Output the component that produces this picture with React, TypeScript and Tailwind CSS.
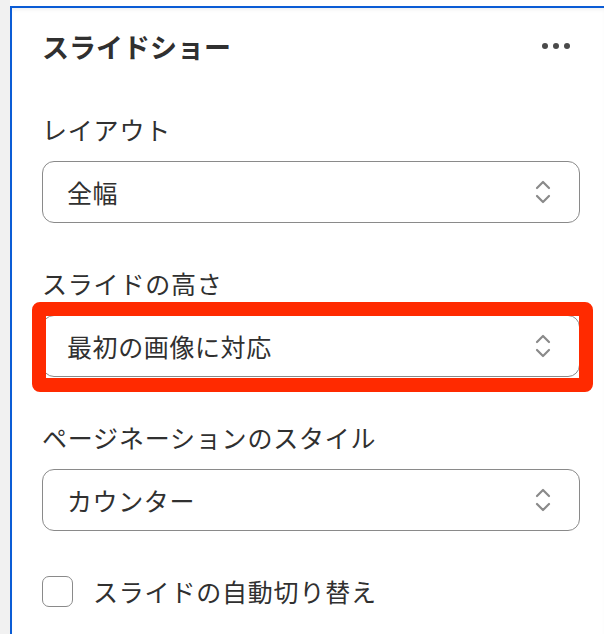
import React from "react";

const font = { fontFamily: '"Noto Sans CJK JP", "Noto Sans", sans-serif' };

function Chevrons() {
  return (
    <svg width="16" height="24" viewBox="0 0 16 24" fill="none" stroke="#8a8a8a" strokeWidth="2.2" strokeLinecap="round" strokeLinejoin="round">
      <polyline points="2,8 8,2 14,8" />
      <polyline points="2,16 8,22 14,16" />
    </svg>
  );
}

function Select({ value }: { value: string }) {
  return (
    <div className="flex h-[62px] items-center justify-between rounded-[12px] border border-[#8a8a8a] bg-white pl-[24px] pr-[28px]">
      <span className="text-[25px] leading-none tracking-[0.6px] text-[#303030]">{value}</span>
      <Chevrons />
    </div>
  );
}

function Field({ label, value, highlight }: { label: string; value: string; highlight?: boolean }) {
  return (
    <div className="mt-[44px] flex flex-col">
      <div className="h-[32px] text-[25px] leading-[32px] tracking-[0.8px] text-[#303030]">{label}</div>
      <div className="relative mt-[16px]">
        <Select value={value} />
        {highlight && (
          <div className="pointer-events-none absolute -top-[13px] -bottom-[15px] -left-[10px] -right-[13px] rounded-[8px] border-[14px] border-[#ff2a00]" />
        )}
      </div>
    </div>
  );
}

export default function App() {
  return (
    <div className="flex h-[634px] w-[604px] overflow-hidden bg-white" style={font}>
      <div className="w-[10px] shrink-0 bg-[#f1f1f1]" />
      <div className="flex flex-1 flex-col pt-[6px]">
        <div className="flex flex-1 flex-col border-t-2 border-l-2 border-[#0b5cd5] pl-[30px] pr-[24px] shadow-[inset_0_3px_4px_-2px_rgba(0,0,0,0.08)]">
          <div className="mt-[20px] flex h-[36px] items-center justify-between">
            <h2 className="text-[27px] font-bold leading-none text-[#303030]">スライドショー</h2>
            <div className="mr-[10px] flex items-center gap-[5px]">
              <span className="h-[6px] w-[6px] rounded-full bg-[#4a4a4a]" />
              <span className="h-[6px] w-[6px] rounded-full bg-[#4a4a4a]" />
              <span className="h-[6px] w-[6px] rounded-full bg-[#4a4a4a]" />
            </div>
          </div>
          <div className="mt-[5px]">
            <Field label="レイアウト" value="全幅" />
          </div>
          <Field label="スライドの高さ" value="最初の画像に対応" highlight />
          <Field label="ページネーションのスタイル" value="カウンター" />
          <label className="mt-[44px] flex items-center gap-[20px]">
            <span className="h-[31px] w-[31px] rounded-[7px] border-[1.5px] border-[#8a8a8a] bg-white" />
            <span className="text-[25px] leading-[32px] tracking-[0.8px] text-[#303030]">スライドの自動切り替え</span>
          </label>
        </div>
      </div>
    </div>
  );
}
